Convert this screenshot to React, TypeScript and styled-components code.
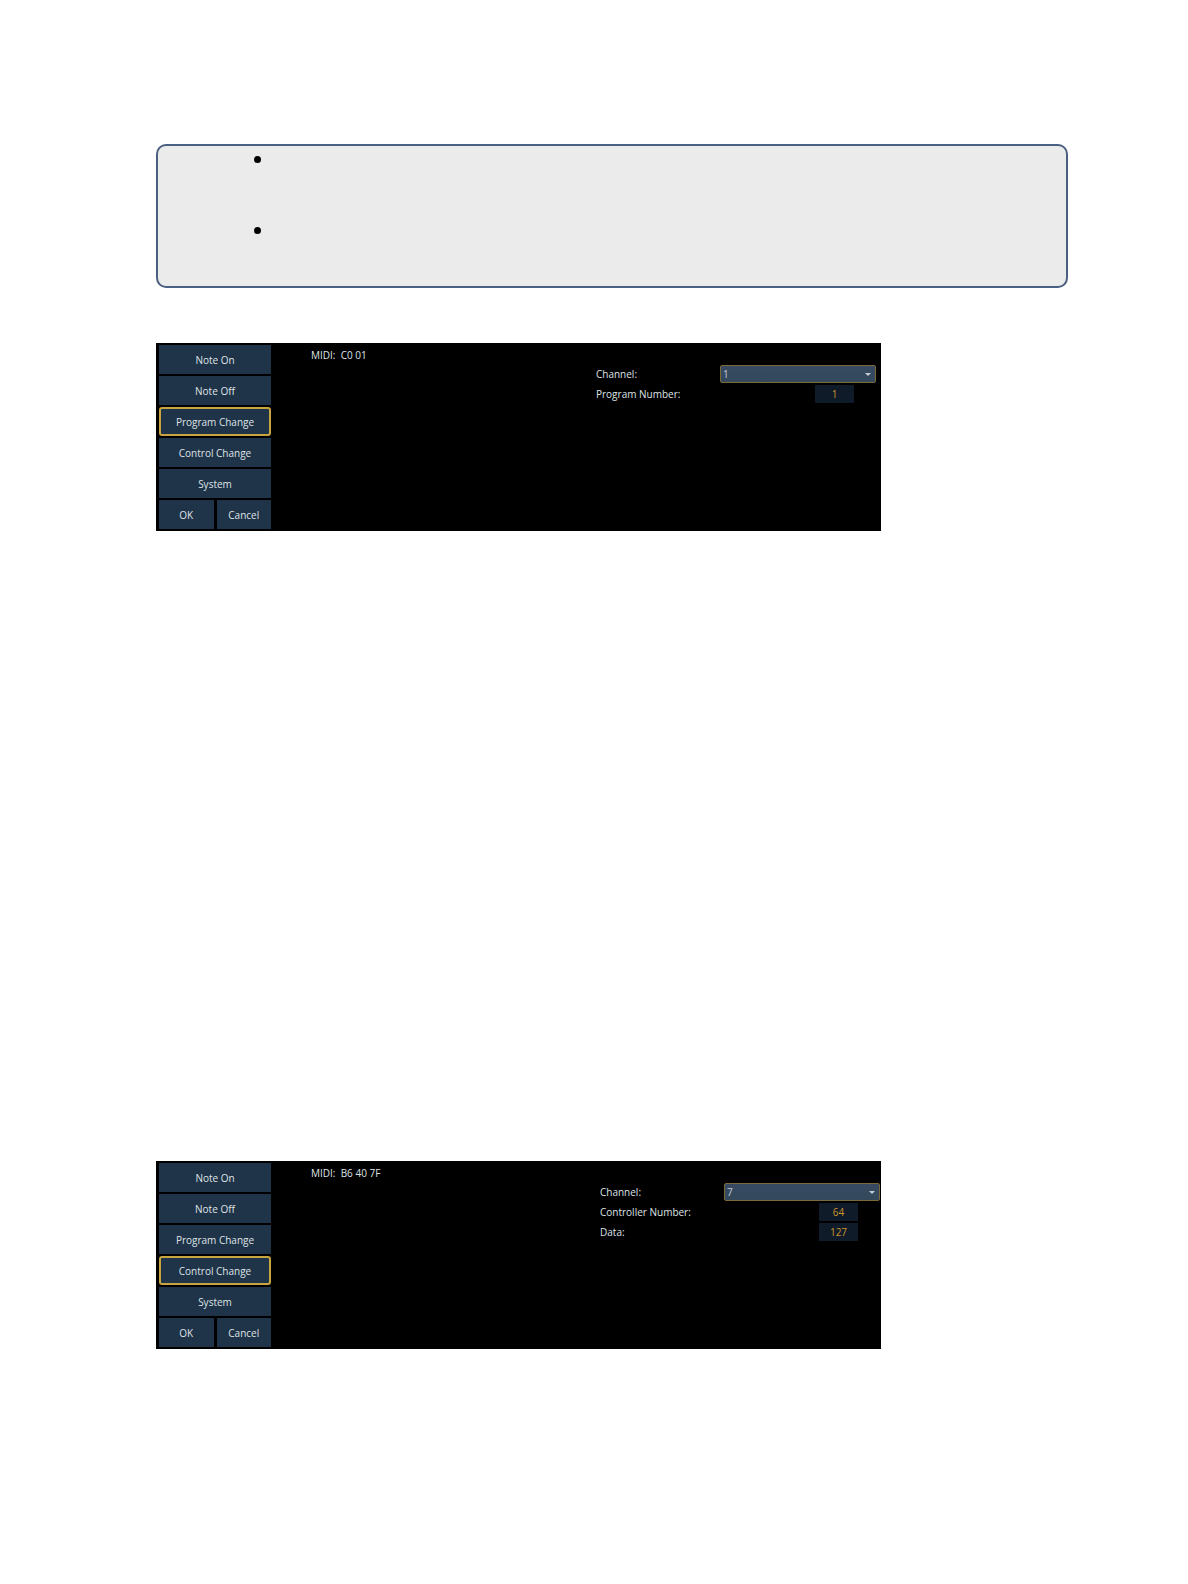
import React, { useState } from "react";
import styled, { createGlobalStyle } from "styled-components";

type Field = { label: string; value: string };

type EditorProps = {
	id: string;
	initialType: string;
	message: string;
	initialChannel: string;
	fields: Field[];
	inset: number;
};

const messageTypes = ['Note On', 'Note Off', 'Program Change', 'Control Change', 'System'];
const channels = Array.from({ length: 16 }, (_, i) => String(i + 1));

const MidiEditor: React.FC<EditorProps> = ({ id, initialType, message, initialChannel, fields, inset }) => {
	const [type, setType] = useState(initialType);
	const [channel, setChannel] = useState(initialChannel);

	return (
		<Panel>
			<TypeList>
				{messageTypes.map((name) => (
					<TypeButton key={name} type="button" $active={type === name} onClick={() => setType(name)}>
						{name}
					</TypeButton>
				))}
				<Actions>
					<TypeButton type="button">OK</TypeButton>
					<TypeButton type="button">Cancel</TypeButton>
				</Actions>
			</TypeList>
			<Readout>{'MIDI:  ' + message}</Readout>
			<Fields $inset={inset}>
				<FieldRow>
					<Label htmlFor={`${id}-channel`}>Channel:</Label>
					<SelectBox>
						<Select id={`${id}-channel`} value={channel} onChange={(e) => setChannel(e.target.value)}>
							{channels.map((c) => <option key={c} value={c}>{c}</option>)}
						</Select>
						<Arrow viewBox="0 0 6 3" aria-hidden="true">
							<path d="M0 0h6L3 3z" fill="#c3ccd6" />
						</Arrow>
					</SelectBox>
				</FieldRow>
				{fields.map((field, i) => (
					<FieldRow key={field.label}>
						<Label htmlFor={`${id}-field-${i}`}>{field.label}</Label>
						<NumberInput id={`${id}-field-${i}`} defaultValue={field.value} />
					</FieldRow>
				))}
			</Fields>
		</Panel>
	);
};

const App: React.FC = () => (
	<>
		<GlobalStyle />
		<Page>
			<Note>
				<NoteItem />
				<NoteItem />
			</Note>
			<Editors>
				<MidiEditor
					id="program"
					initialType="Program Change"
					message="C0 01"
					initialChannel="1"
					fields={[{ label: 'Program Number:', value: '1' }]}
					inset={5}
				/>
				<MidiEditor
					id="control"
					initialType="Control Change"
					message="B6 40 7F"
					initialChannel="7"
					fields={[
						{ label: 'Controller Number:', value: '64' },
						{ label: 'Data:', value: '127' },
					]}
					inset={1}
				/>
			</Editors>
		</Page>
	</>
);

const GlobalStyle = createGlobalStyle`
	* {
		box-sizing: border-box;
	}
	body {
		margin: 0;
		background: #fff;
	}
	body, button, input, select {
		font-family: "Open Sans", "Noto Sans", sans-serif;
		font-size: 10px;
		line-height: 16px;
	}
`;
const Page = styled.main`
	min-height: 100vh;
	padding: 144px 120px 160px 156px;
`;
const Note = styled.ul`
	display: flex;
	flex-direction: column;
	gap: 21px;
	margin: 0;
	padding: 10px 96px 9px;
	list-style: none;
	background: #ebebeb;
	border: 2px solid #4a6080;
	border-radius: 10px;
`;
const NoteItem = styled.li`
	min-height: 50px;
	&::before {
		content: "";
		display: block;
		width: 7px;
		height: 7px;
		border-radius: 50%;
		background: #000;
	}
`;
const Editors = styled.div`
	display: flex;
	flex-direction: column;
	gap: 630px;
	padding-top: 55px;
`;
const Panel = styled.section`
	display: flex;
	max-width: 725px;
	padding: 2px 0 2px 3px;
	background: #000;
	color: #dfe3e6;
`;
const TypeList = styled.div`
	display: flex;
	flex-direction: column;
	gap: 2px;
	width: 112px;
`;
const TypeButton = styled.button<{ $active?: boolean }>`
	flex: 1;
	height: 29px;
	min-height: 29px;
	padding: 0;
	background: #1f3349;
	border: ${(p) => (p.$active ? '2px solid #c9a540' : '0')};
	border-radius: ${(p) => (p.$active ? '3px' : '0')};
	color: #dfe3e6;
	cursor: pointer;
`;
const Actions = styled.div`
	display: flex;
	gap: 3px;
`;
const Readout = styled.div`
	flex: 1;
	padding: 2px 0 0 40px;
	white-space: pre;
`;
const Fields = styled.div<{ $inset: number }>`
	display: flex;
	flex-direction: column;
	gap: 2px;
	padding-top: 20px;
	padding-right: ${(p) => p.$inset}px;
`;
const FieldRow = styled.div`
	display: flex;
	justify-content: space-between;
	align-items: center;
	width: 280px;
	height: 18px;
`;
const Label = styled.label`
	white-space: nowrap;
`;
const SelectBox = styled.div`
	position: relative;
	width: 156px;
`;
const Select = styled.select`
	display: block;
	appearance: none;
	width: 100%;
	height: 18px;
	padding: 0 2px;
	background: linear-gradient(#374a62, #34495c);
	border: 1px solid #7a6a38;
	border-radius: 2px;
	color: #c3ccd6;
`;
const Arrow = styled.svg`
	position: absolute;
	top: 8px;
	right: 5px;
	width: 6px;
	height: 3px;
	pointer-events: none;
`;
const NumberInput = styled.input`
	width: 39px;
	height: 18px;
	margin-right: 22px;
	padding: 0;
	background: #101b29;
	border: 0;
	color: #c9952c;
	text-align: center;
`;

export default App;
